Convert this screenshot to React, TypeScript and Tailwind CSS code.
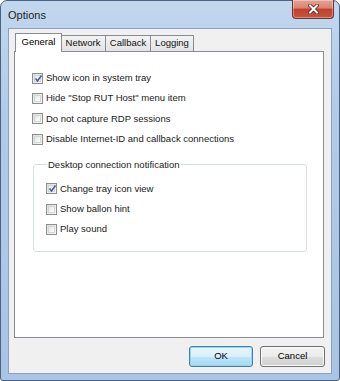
import React from "react";

const font = { fontFamily: '"Liberation Sans", Arial, sans-serif' };

function CheckBox({ checked }: { checked?: boolean }) {
  return (
    <span className="relative w-[11px] h-[11px] shrink-0 border border-[#8e8f8f] bg-[linear-gradient(135deg,#dcdcdc,#f8f8f8)] p-[1px]">
      <span className="block w-full h-full border border-[#d6d6d6] bg-[linear-gradient(135deg,#e4e4e4,#ffffff)]" />
      {checked && (
        <svg
          className="absolute left-[1px] top-[0px]"
          width="9"
          height="9"
          viewBox="0 0 9 9"
        >
          <path
            d="M1.5 4.5 L3.5 7 L7.5 1.5"
            fill="none"
            stroke="#4a5f97"
            strokeWidth="1.6"
          />
        </svg>
      )}
    </span>
  );
}

function Option({
  label,
  checked,
}: {
  label: string;
  checked?: boolean;
}) {
  return (
    <label className="flex items-center h-[20.4px] gap-[3px] text-[9.5px] text-[#1a1a1a]">
      <CheckBox checked={checked} />
      <span>{label}</span>
    </label>
  );
}

function Tab({
  label,
  width,
  active,
}: {
  label: string;
  width: string;
  active?: boolean;
}) {
  if (active) {
    return (
      <div
        className={`relative z-10 -mb-[1px] h-[19px] -mr-[1px] border border-b-0 border-[#898c95] bg-white flex items-center justify-center text-[9.5px] text-black pb-[1px] ${width}`}
      >
        {label}
      </div>
    );
  }
  return (
    <div
      className={`h-[16px] border border-b-0 border-l-0 border-[#898c95] bg-[linear-gradient(#f3f3f3,#e3e3e3)] flex items-center justify-center text-[9.5px] text-[#111] ${width}`}
    >
      {label}
    </div>
  );
}

function Button({
  label,
  primary,
}: {
  label: string;
  primary?: boolean;
}) {
  return (
    <button
      className={
        primary
          ? "h-[21px] w-[64px] rounded-[3px] border border-[#3c7fb1] bg-[linear-gradient(#e8f5fc_0%,#d9effb_50%,#bee5fa_51%,#a7d9f5_100%)] shadow-[inset_0_0_0_1px_#9ad6f2] text-[9.5px] text-black"
          : "h-[21px] w-[65px] rounded-[3px] border border-[#707070] bg-[linear-gradient(#f2f2f2_0%,#ebebeb_50%,#dddddd_51%,#cfcfcf_100%)] shadow-[inset_0_0_0_1px_#fbfbfb] text-[9.5px] text-black"
      }
    >
      {label}
    </button>
  );
}

export default function App() {
  return (
    <div
      style={font}
      className="w-[340px] h-[381px] rounded-t-[7px] rounded-b-[3px] border border-[#4b6383] bg-[linear-gradient(#c2d7ee,#b1cae7_30%,#a9c4e4)] flex flex-col"
    >
      <div className="h-[27px] flex items-start justify-between pl-[7px] pr-[5px]">
        <span className="mt-[6px] text-[11px] text-[#1e1e1e]">Options</span>
        <div className="w-[42px] h-[19px] -mt-[1px] rounded-b-[4px] border border-t-0 border-[#6b3434] bg-[linear-gradient(#e6a293_0%,#d88373_45%,#c2402c_50%,#c7533d_100%)] shadow-[inset_0_0_0_1px_rgba(255,255,255,0.35)] flex items-center justify-center">
          <svg width="11" height="10" viewBox="0 0 11 10">
            <path
              d="M2 1.5 L9 8.5 M9 1.5 L2 8.5"
              stroke="#5a1f1a"
              strokeWidth="3.6"
              strokeLinecap="square"
            />
            <path
              d="M2 1.5 L9 8.5 M9 1.5 L2 8.5"
              stroke="#ffffff"
              strokeWidth="2"
              strokeLinecap="square"
            />
          </svg>
        </div>
      </div>

      <div className="flex-1 mx-[7px] mb-[6px] border border-[#8aa2c1] bg-[#f0f0f0] flex flex-col px-[5px] pt-[4px]">
        <div className="flex items-end pl-[1px]">
          <Tab label="General" width="w-[47px]" active />
          <Tab label="Network" width="w-[45px]" />
          <Tab label="Callback" width="w-[45px]" />
          <Tab label="Logging" width="w-[43px]" />
        </div>
        <div className="h-[287px] w-[310px] border border-[#898c95] bg-white flex flex-col pl-[17px] pr-[16px] pt-[16px]">
          <Option label="Show icon in system tray" checked />
          <Option label='Hide "Stop RUT Host" menu item' />
          <Option label="Do not capture RDP sessions" />
          <Option label="Disable Internet-ID and callback connections" />

          <fieldset className="mt-[9px] ml-[1px] h-[93px] border border-[#d5dfe5] rounded-[3px] pl-[12px] pr-[8px] pt-[8px]">
            <legend className="ml-[1px] px-[1px] text-[9.5px] text-[#1a1a1a] leading-[12px]">
              Desktop connection notification
            </legend>
            <Option label="Change tray icon view" checked />
            <Option label="Show ballon hint" />
            <Option label="Play sound" />
          </fieldset>
        </div>
        <div className="flex justify-end gap-[7px] mt-[8px] pr-[1px]">
          <Button label="OK" primary />
          <Button label="Cancel" />
        </div>
      </div>
    </div>
  );
}
